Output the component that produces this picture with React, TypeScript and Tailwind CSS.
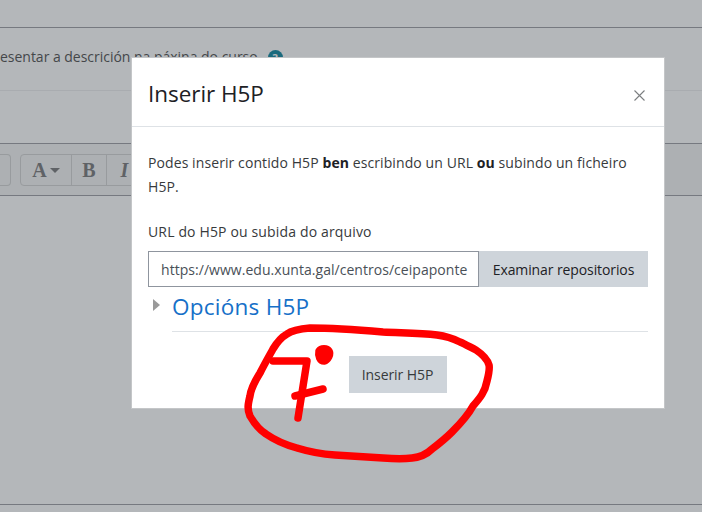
export default function App() {
  return (
    <div className="relative h-[512px] w-[702px] overflow-hidden bg-[#b4b7ba] font-['Open_Sans',sans-serif] text-[#373a3c]">
      <div className="flex h-full flex-col">
        <div className="h-[27px] shrink-0 border-b border-[#767980] box-content" />
        <div className="flex h-[62px] shrink-0 items-start whitespace-nowrap border-b border-[#a9acb0] box-content">
          <span className="mt-[18px] text-[14px] leading-[22px] tracking-[-0.02px] text-[#44474a]">esentar a descrición na páxina do curso</span>
          <span className="ml-[10px] mt-[22px] flex h-[15px] w-[15px] items-center justify-center rounded-full bg-[#1b6a7d] text-[11px] font-bold leading-none text-[#b4b7ba]">?</span>
        </div>
        <div className="h-[52px] shrink-0" />
        <div className="flex h-[53px] shrink-0 items-center gap-[9px] border-y border-[#767980] bg-[#adb0b3] box-border">
          <div className="h-[32px] w-[11px] rounded-r-[4px] border border-l-0 border-[#989b9e]" />
          <div className="flex h-[32px] w-[200px] rounded-[4px] border border-[#989b9e] font-['Liberation_Serif',serif] font-bold text-[#5f6266]">
            <div className="flex w-[51px] items-center justify-center gap-[3px] border-r border-[#989b9e] text-[20px]">
              A
              <span className="mt-[1px] h-0 w-0 border-x-[5px] border-t-[5px] border-x-transparent border-t-[#5f6266]" />
            </div>
            <div className="flex w-[35px] items-center justify-center border-r border-[#989b9e] text-[20px]">B</div>
            <div className="flex w-[35px] items-center justify-center text-[20px] italic">I</div>
          </div>
        </div>
        <div className="h-[308px] shrink-0 border-b border-[#767980] box-content" />
      </div>

      <div className="absolute left-[131px] top-[57px] flex h-[352px] w-[534px] flex-col border border-[#c4c6c8] bg-white">
        <div className="flex h-[69px] shrink-0 items-start justify-between border-b border-[#dee2e6] pl-4 pr-[19px]">
          <h2 className="mt-[19px] text-[22.5px] font-normal leading-[34px] tracking-[-0.05px] text-[#1d2125]">Inserir H5P</h2>
          <svg className="mt-[32px]" width="11" height="11" viewBox="0 0 11 11" fill="none" stroke="#7b7e80" strokeWidth="1.1">
            <path d="M0.5 0.5 10.5 10.5M10.5 0.5 0.5 10.5" />
          </svg>
        </div>
        <div className="flex flex-1 flex-col px-4 pt-[24px]">
          <p className="text-[14px] leading-[23.5px] tracking-[0.09px] text-[#373a3c]">
            Podes inserir contido H5P <strong className="font-bold text-[#1d2125]">ben</strong> escribindo un URL <strong className="font-bold text-[#1d2125]">ou</strong> subindo un ficheiro H5P.
          </p>
          <label className="mt-[22px] text-[14px] leading-[23px] tracking-[0.15px]">URL do H5P ou subida do arquivo</label>
          <div className="mt-[8px] flex h-[36px]">
            <div className="flex w-[331px] items-center overflow-hidden whitespace-nowrap border border-[#8f959e] pl-[12px] text-[14px] tracking-[0.04px] text-[#495057]">
              https://www.edu.xunta.gal/centros/ceipaponte
            </div>
            <button className="w-[169px] bg-[#ced4da] text-[14px] tracking-[-0.1px] text-[#1d2125]">Examinar repositorios</button>
          </div>
          <div className="relative mt-[3px] h-[42px] pl-[24px]">
            <span className="absolute left-[5px] top-[9px] h-0 w-0 border-y-[6px] border-l-[7px] border-y-transparent border-l-[#9a9a9a]" />
            <div className="h-full border-b border-[#dee2e6]">
              <span className="text-[22.5px] leading-[34px] tracking-[0.25px] text-[#1670c8]">Opcións H5P</span>
            </div>
          </div>
          <div className="mt-[24px] flex justify-center pr-[1px]">
            <button className="h-[37px] w-[98px] bg-[#ced4da] text-[14px] tracking-[-0.07px] text-[#373a3c]">Inserir H5P</button>
          </div>
        </div>
      </div>

      <svg className="pointer-events-none absolute inset-0" width="702" height="512" viewBox="0 0 702 512" fill="none" stroke="#ff0000" strokeWidth="7.5" strokeLinecap="round" strokeLinejoin="round">
        <path d="M310 328C298 329 291 331 287 334C280 338 276 344 273 349C268 358 264 365 260 373C255 381 251 388 250 396C248 404 247 409 250 416C254 423 258 429 266 434C276 441 286 445 297 448C310 452 320 454 335 455C350 456 365 457 383 458C395 459 405 459 412 458C421 457 427 454 432 449C440 443 446 438 452 432C460 424 467 417 473 406C480 398 485 392 487 381C489 373 490 369 489 365C487 358 482 354 476 350C470 347 465 344 460 342C452 338 445 336 437 335C420 333 402 333 383 332C360 330 335 328 310 328Z" />
        <path d="M273 361H307L298 418" />
        <path d="M295 396L323 389" />
        <path d="M319 351C318 356 320 361 324 361C328 360 331 354 329 351C327 348 321 348 319 351Z" fill="#ff0000" />
      </svg>
    </div>
  );
}
